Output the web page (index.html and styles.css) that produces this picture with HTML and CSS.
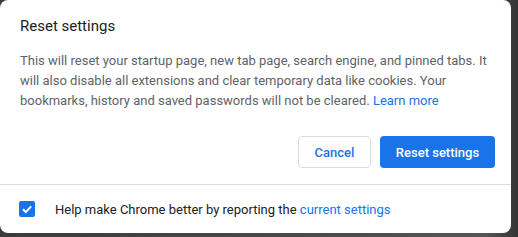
FILE: index.html
```html
<!DOCTYPE html>
<html lang="en">
<head>
    <meta charset="UTF-8">
    <title>Reset settings</title>
    <link rel="stylesheet" href="styles.css">
</head>
<body>
    <div class="dialog">
        <div class="dialog-body">
            <h1 class="title">Reset settings</h1>
            <p class="message">
                This will reset your startup page, new tab page, search engine, and pinned tabs. It
                will also disable all extensions and clear temporary data like cookies. Your
                bookmarks, history and saved passwords will not be cleared.
                <a href="#" class="link">Learn more</a>
            </p>
            <div class="actions">
                <button class="btn btn-cancel">Cancel</button>
                <button class="btn btn-primary">Reset settings</button>
            </div>
        </div>
        <div class="dialog-footer">
            <span class="checkbox">
                <svg width="12" height="12" viewBox="0 0 12 12">
                    <path d="M2 6.2 L4.8 9 L10.2 3.4" fill="none" stroke="#fff" stroke-width="2"/>
                </svg>
            </span>
            <span class="footer-text">Help make Chrome better by reporting the <a href="#" class="link">current settings</a></span>
        </div>
    </div>
</body>
</html>
```

FILE: styles.css
```css
body {
    margin: 0;
    background: linear-gradient(to right, #3a3a3a, #555 94%, #333);
    font-family: Roboto, "Noto Sans", Arial, sans-serif;
    height: 237px;
    overflow: hidden;
}

.dialog {
    width: 511px;
    height: 233px;
    background: #fff;
    border-radius: 8px;
    display: flex;
    flex-direction: column;
}

.dialog-body {
    padding: 16px 16px 0 20px;
}

.title {
    margin: 0;
    font-size: 15px;
    font-weight: 400;
    color: #202124;
    line-height: 20px;
}

.message {
    margin: 15px 0 0;
    font-size: 13px;
    line-height: 20px;
    color: #5f6368;
}

.link {
    color: #1a73e8;
    text-decoration: none;
}

.actions {
    display: flex;
    justify-content: flex-end;
    gap: 9px;
    margin-top: 25px;
}

.btn {
    height: 32px;
    border-radius: 4px;
    font-family: inherit;
    font-size: 13px;
    font-weight: 500;
    padding: 0;
    white-space: nowrap;
    cursor: pointer;
}

.btn-cancel {
    width: 73px;
    background: #fff;
    color: #1a73e8;
    border: 1px solid #dadce0;
}

.btn-primary {
    width: 115px;
    background: #1a73e8;
    color: #fff;
    border: none;
}

.dialog-footer {
    margin-top: 16px;
    border-top: 1px solid #dadce0;
    flex: 1;
    display: flex;
    align-items: center;
    padding-left: 19px;
    gap: 20px;
}

.checkbox {
    width: 16px;
    height: 16px;
    border-radius: 2px;
    background: #1a73e8;
    display: flex;
    align-items: center;
    justify-content: center;
}

.footer-text {
    font-size: 13px;
    color: #202124;
}
```
